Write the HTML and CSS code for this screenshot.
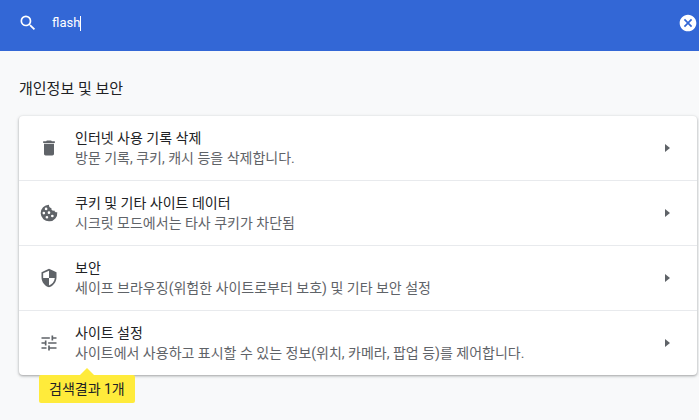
FILE: index.html
```html
<!DOCTYPE html>
<html lang="ko">
<head>
<meta charset="utf-8">
<title>설정</title>
<link rel="stylesheet" href="styles.css">
</head>
<body>
<header class="toolbar">
  <svg class="icon search-icon" viewBox="0 0 24 24" aria-hidden="true"><path d="M15.5 14h-.79l-.28-.27A6.47 6.47 0 0 0 16 9.500 6.500 6.500 0 1 0 9.500 16c1.610 0 3.090-.59 4.230-1.570l.27.28v.79l5 4.990L20.490 19l-4.990-5zm-6 0C7.010 14 5 11.990 5 9.500S7.010 5 9.500 5 14 7.010 14 9.500 11.990 14 9.500 14z"/></svg>
  <div class="field"><input class="search" type="text" aria-label="설정 검색" value="flash"></div>
  <button class="clear" type="button" aria-label="검색어 지우기">
    <svg class="icon" viewBox="0 0 24 24" aria-hidden="true"><path d="M12 2C6.470 2 2 6.470 2 12s4.470 10 10 10 10-4.470 10-10S17.530 2 12 2zm5 13.590L15.590 17 12 13.410 8.410 17 7 15.590 10.590 12 7 8.410 8.410 7 12 10.590 15.590 7 17 8.410 13.410 12 17 15.590z"/></svg>
  </button>
</header>
<main class="content">
  <h2 class="heading">개인정보 및 보안</h2>
  <div class="card">
    <button class="row" type="button">
      <svg class="icon" viewBox="0 0 24 24" aria-hidden="true"><path d="M6 19c0 1.100.9 2 2 2h8c1.100 0 2-.9 2-2V7H6v12zM19 4h-3.500l-1-1h-5l-1 1H5v2h14V4z"/></svg>
      <span class="text"><span class="label">인터넷 사용 기록 삭제</span><span class="sub">방문 기록, 쿠키, 캐시 등을 삭제합니다.</span></span>
      <span class="arrow"></span>
    </button>
    <button class="row" type="button">
      <svg class="icon" viewBox="0 0 24 24" aria-hidden="true"><path fill-rule="evenodd" d="M12 2a10 10 0 1 0 9.950 9c-1.600.6-3.200-.2-3.500-1.900-2.500.5-4-1-3.600-3.100C12.800 5.700 11.700 4.100 12 2zM8.500 5.500a1.600 1.600 0 1 1 0 3.200 1.600 1.600 0 0 1 0-3.200zM5.800 10.500a1.600 1.600 0 1 1 0 3.200 1.600 1.600 0 0 1 0-3.200zM12 10a1.600 1.600 0 1 1 0 3.200 1.600 1.600 0 0 1 0-3.200zM9.500 15.500a1.600 1.600 0 1 1 0 3.200 1.600 1.600 0 0 1 0-3.200zM16 14a1.600 1.600 0 1 1 0 3.200 1.600 1.600 0 0 1 0-3.200z"/></svg>
      <span class="text"><span class="label">쿠키 및 기타 사이트 데이터</span><span class="sub">시크릿 모드에서는 타사 쿠키가 차단됨</span></span>
      <span class="arrow"></span>
    </button>
    <button class="row" type="button">
      <svg class="icon" viewBox="0 0 24 24" aria-hidden="true"><path d="M12 1L3 5v6c0 5.550 3.840 10.740 9 12 5.160-1.260 9-6.450 9-12V5l-9-4zm0 10.990h7c-.53 4.120-3.280 7.790-7 8.940V12H5V6.300l7-3.110v8.800z"/></svg>
      <span class="text"><span class="label">보안</span><span class="sub">세이프 브라우징(위험한 사이트로부터 보호) 및 기타 보안 설정</span></span>
      <span class="arrow"></span>
    </button>
    <button class="row" type="button">
      <svg class="icon" viewBox="0 0 24 24" aria-hidden="true"><path d="M3 17v2h6v-2H3zM3 5v2h10V5H3zm10 16v-2h8v-2h-8v-2h-2v6h2zM7 9v2H3v2h4v2h2V9H7zm14 4v-2H11v2h10zm-6-4h2V7h4V5h-4V3h-2v6z"/></svg>
      <span class="text"><span class="label">사이트 설정</span><span class="sub">사이트에서 사용하고 표시할 수 있는 정보(위치, 카메라, 팝업 등)를 제어합니다.</span></span>
      <span class="arrow"></span>
    </button>
    <div class="bubble" role="status">검색결과 1개</div>
  </div>
</main>
</body>
</html>
```

FILE: styles.css
```css
* {
  box-sizing: border-box;
}

body {
  min-height: 100vh;
  margin: 0;
  background: #f8f9fa;
  color: #202124;
  font: 14px/20px Roboto, "Noto Sans CJK KR", sans-serif;
}

.icon {
  display: block;
  flex: none;
  width: 20px;
  height: 20px;
  fill: #5f6368;
}

.toolbar {
  display: flex;
  align-items: center;
  height: 51px;
  padding: 0 1px 6px 18px;
  background: #3367d6;
}

.toolbar .icon {
  fill: #fff;
}

.field {
  position: relative;
  flex: 1;
  min-width: 0;
  margin-left: 14px;
}

/* Text cursor after the query */
.field::after {
  content: "";
  position: absolute;
  top: 3px;
  left: 28px;
  width: 1px;
  height: 15px;
  background: #fff;
}

.search {
  display: block;
  width: 100%;
  padding: 0;
  border: 0;
  outline: 0;
  background: none;
  color: #fff;
  caret-color: transparent;
  font: inherit;
  font-size: 13px;
}

.clear {
  padding: 0;
  border: 0;
  background: none;
}

.content {
  padding: 28px 2px 44px 19px;
}

.heading {
  margin: 0 0 17px;
  font-size: 15px;
  font-weight: 400;
  line-height: 20px;
}

.card {
  position: relative;
  border-radius: 4px;
  background: #fff;
  box-shadow: 0 1px 2px rgba(60, 64, 67, 0.3), 0 1px 3px 1px rgba(60, 64, 67, 0.15);
}

.row {
  box-sizing: content-box;
  display: flex;
  align-items: center;
  width: calc(100% - 47px);
  min-height: 64px;
  padding: 0 27px 0 20px;
  border: 0;
  background: none;
  color: inherit;
  font: inherit;
  text-align: left;
}

.row + .row {
  border-top: 1px solid #e8eaed;
}

.text {
  flex: 1;
  margin-left: 16px;
}

.label,
.sub {
  display: block;
}

.sub {
  color: #5f6368;
}

.arrow {
  border: 4px solid transparent;
  border-left: 5px solid #5f6368;
  border-right: 0;
}

.bubble {
  position: absolute;
  top: 100%;
  left: 20px;
  padding: 4px 10px;
  border-radius: 2px;
  background: #ffeb3b;
}

.bubble::before {
  content: "";
  position: absolute;
  bottom: 100%;
  left: 50%;
  margin-left: -7px;
  border: 7px solid transparent;
  border-top: 0;
  border-bottom-color: #ffeb3b;
}
```
